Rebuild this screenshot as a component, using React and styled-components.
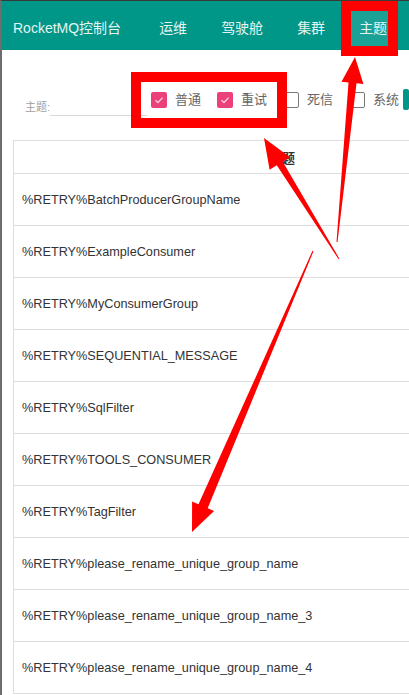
import React from "react";
import styled, { createGlobalStyle } from "styled-components";

const GlobalStyle = createGlobalStyle`
  html, body {
    margin: 0;
    padding: 0;
    background: #fff;
    overflow: hidden;
  }
  body {
    font-family: "Liberation Sans", "Noto Sans CJK SC", sans-serif;
  }
`;

const Page = styled.div`
  position: relative;
  width: 409px;
  height: 695px;
  box-sizing: border-box;
  border-top: 1px solid #3a3a3a;
  border-left: 2px solid #6d6d6d;
  overflow: hidden;
`;

const Header = styled.div`
  display: flex;
  align-items: stretch;
  height: 49px;
  padding-left: 11px;
  background: #009688;
  color: #e4f4f2;
  font-size: 14px;
`;

const Brand = styled.div`
  display: flex;
  align-items: center;
  padding-top: 2px;
  margin-right: 28px;
  white-space: nowrap;
`;

const Nav = styled.div`
  display: flex;
  gap: 14px;
`;

const NavItem = styled.div`
  display: flex;
  align-items: center;
  padding: 0 10px;
  padding-top: 2px;
  white-space: nowrap;
  background: ${(p) => (p.$active ? "#1ba195" : "transparent")};
`;

const FilterBar = styled.div`
  display: flex;
  align-items: flex-start;
  height: 90px;
  box-sizing: border-box;
  padding: 42px 0 0 23px;
  white-space: nowrap;
`;

const SearchField = styled.div`
  display: flex;
  align-items: flex-end;
  margin-top: 1px;
  height: 23px;
`;

const SearchLabel = styled.span`
  font-size: 11px;
  line-height: 13px;
  color: #a0a0a0;
  margin-bottom: 2px;
`;

const SearchInput = styled.div`
  width: 97px;
  height: 22px;
  border-bottom: 1px solid #d9d9d9;
`;

const CheckItem = styled.label`
  display: flex;
  align-items: center;
  gap: 8px;
  margin-left: ${(p) => (p.$first ? "4px" : "16px")};
  font-size: 13px;
  color: #666;
  line-height: 16px;
`;

const Box = styled.span`
  display: flex;
  align-items: center;
  justify-content: center;
  width: 16px;
  height: 16px;
  box-sizing: border-box;
  border-radius: 2px;
  background: ${(p) => (p.$checked ? "#ec407a" : "#fff")};
  border: ${(p) => (p.$checked ? "none" : "1.5px solid #777")};
`;

const QueryButton = styled.div`
  margin-left: 4px;
  margin-top: -3px;
  height: 21px;
  width: 50px;
  border-radius: 2px;
  background: #009688;
`;

const Table = styled.div`
  margin-left: 11px;
  width: 536px;
  border: 1px solid #dddddd;
  border-bottom: none;
`;

const HeadRow = styled.div`
  display: flex;
  align-items: center;
  justify-content: center;
  height: 32px;
  border-bottom: 1px solid #dddddd;
  font-size: 13px;
  font-weight: bold;
  color: #333;
`;

const Row = styled.div`
  display: flex;
  align-items: center;
  height: 51px;
  padding-left: 8px;
  border-bottom: 1px solid #dddddd;
  font-size: 12.7px;
  color: #333;
  white-space: nowrap;
`;

const Overlay = styled.svg`
  position: absolute;
  left: -2px;
  top: -1px;
  width: 409px;
  height: 695px;
  pointer-events: none;
`;

const topics = [
  "%RETRY%BatchProducerGroupName",
  "%RETRY%ExampleConsumer",
  "%RETRY%MyConsumerGroup",
  "%RETRY%SEQUENTIAL_MESSAGE",
  "%RETRY%SqlFilter",
  "%RETRY%TOOLS_CONSUMER",
  "%RETRY%TagFilter",
  "%RETRY%please_rename_unique_group_name",
  "%RETRY%please_rename_unique_group_name_3",
  "%RETRY%please_rename_unique_group_name_4",
];

const filters = [
  { label: "普通", checked: true },
  { label: "重试", checked: true },
  { label: "死信", checked: false },
  { label: "系统", checked: false },
];

// tapered arrow: thin tail, wider neck, triangular head
const arrowPoints = ([x1, y1], [x2, y2], headLen, headHalf, tailW, neckW) => {
  const dx = x2 - x1;
  const dy = y2 - y1;
  const len = Math.hypot(dx, dy);
  const ux = dx / len;
  const uy = dy / len;
  const nx = -uy;
  const ny = ux;
  const bx = x2 - ux * headLen;
  const by = y2 - uy * headLen;
  const pts = [
    [x1 + (nx * tailW) / 2, y1 + (ny * tailW) / 2],
    [bx + (nx * neckW) / 2, by + (ny * neckW) / 2],
    [bx + nx * headHalf, by + ny * headHalf],
    [x2, y2],
    [bx - nx * headHalf, by - ny * headHalf],
    [bx - (nx * neckW) / 2, by - (ny * neckW) / 2],
    [x1 - (nx * tailW) / 2, y1 - (ny * tailW) / 2],
  ];
  return pts.map((p) => p.map((v) => v.toFixed(1)).join(",")).join(" ");
};

const Check = () => (
  <svg width="12" height="12" viewBox="0 0 12 12">
    <path d="M2.5 6.2 L5 8.5 L9.6 3.6" fill="none" stroke="#f6d2de" strokeWidth="1.3" />
  </svg>
);

export default function App() {
  return (
    <>
      <GlobalStyle />
      <Page>
        <Header>
          <Brand>RocketMQ控制台</Brand>
          <Nav>
            <NavItem>运维</NavItem>
            <NavItem>驾驶舱</NavItem>
            <NavItem>集群</NavItem>
            <NavItem $active>主题</NavItem>
          </Nav>
        </Header>

        <FilterBar>
          <SearchField>
            <SearchLabel>主题:</SearchLabel>
            <SearchInput />
          </SearchField>
          {filters.map(({ label, checked }, i) => (
            <CheckItem key={label} $first={i === 0}>
              <Box $checked={checked}>{checked && <Check />}</Box>
              {label}
            </CheckItem>
          ))}
          <QueryButton />
        </FilterBar>

        <Table>
          <HeadRow>主题</HeadRow>
          {topics.map((t) => (
            <Row key={t}>{t}</Row>
          ))}
        </Table>

        <Overlay viewBox="0 0 409 695">
          <rect x="346" y="6" width="47" height="45" fill="none" stroke="#ff0000" strokeWidth="10" />
          <rect x="136" y="77" width="146" height="46" fill="none" stroke="#ff0000" strokeWidth="10" />
          <polygon fill="#ff0000" points={arrowPoints([337, 242], [355, 57], 26, 11, 1, 8)} />
          <polygon fill="#ff0000" points={arrowPoints([339, 259], [264, 138], 30, 12, 1, 7)} />
          <polygon fill="#ff0000" points={arrowPoints([313, 251], [192, 532], 28, 12, 1, 10)} />
        </Overlay>
      </Page>
    </>
  );
}
